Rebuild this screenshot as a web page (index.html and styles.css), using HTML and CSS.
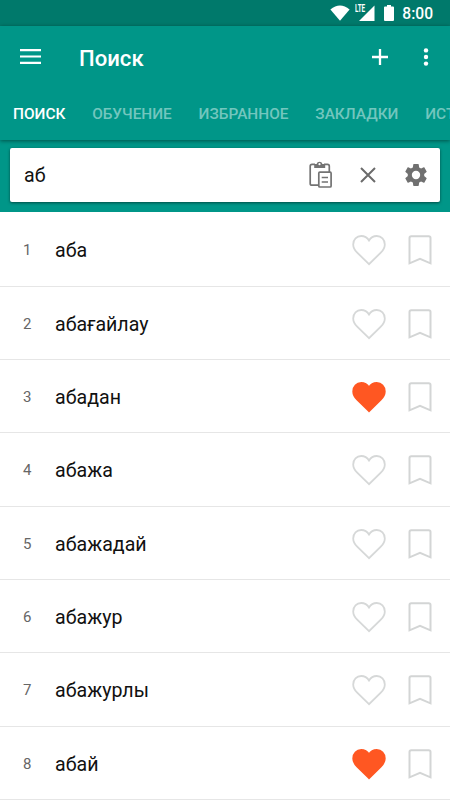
FILE: index.html
```html
<!DOCTYPE html>
<html lang="ru">
<head>
<meta charset="utf-8">
<title>Поиск</title>
<link rel="stylesheet" href="styles.css">
</head>
<body>
<svg class="defs" aria-hidden="true">
  <symbol id="heart" viewBox="0 0 36 32"><path d="M18 30.2 L6.2 18.6 C3.4 15.8 2.2 13.4 2.2 10.4 C2.2 5.4 5.7 2 10.2 2 C13.6 2 16.4 3.8 18 6.5 C19.6 3.8 22.4 2 25.8 2 C30.3 2 33.8 5.4 33.8 10.4 C33.8 13.4 32.6 15.8 29.8 18.6Z"/></symbol>
  <symbol id="bookmark" viewBox="0 0 24 30"><path d="M1.5 28.3V3Q1.5 1.2 3.3 1.2H20.7Q22.5 1.2 22.5 3V28.3L12 23.8Z"/></symbol>
</svg>
<div class="status">
  <svg class="wifi" viewBox="0 0 20 16"><path d="M.4 4.4Q10-3.4 19.6 4.4L10 15.8Z"/></svg>
  <div class="signal"><svg viewBox="0 0 16 16"><path d="M0 16 15.5 .5V16Z"/></svg><span>LTE</span></div>
  <svg class="battery" viewBox="0 0 10 16"><path d="M3 0H7V1.6H9Q10 1.6 10 2.6V15Q10 16 9 16H1Q0 16 0 15V2.6Q0 1.6 1 1.6H3Z"/></svg>
  <span class="clock">8:00</span>
</div>
<header class="header">
  <div class="toolbar">
    <svg class="menu" viewBox="0 0 21 15"><path d="M0 1.2H21M0 7.5H21M0 13.8H21"/></svg>
    <h1>Поиск</h1>
    <svg class="plus" viewBox="0 0 16 16"><path d="M8 0V16M0 8H16"/></svg>
    <svg class="more" viewBox="0 0 6 18"><circle cx="3" cy="2.4" r="2.2"/><circle cx="3" cy="9" r="2.2"/><circle cx="3" cy="15.6" r="2.2"/></svg>
  </div>
  <nav class="tabs"><span class="active">ПОИСК</span><span>ОБУЧЕНИЕ</span><span>ИЗБРАННОЕ</span><span>ЗАКЛАДКИ</span><span>ИСТОРИЯ</span></nav>
</header>
<section class="search">
  <div class="box">
    <span class="query">аб</span>
    <svg class="paste" viewBox="0 0 24 28"><path class="line" d="M10 24.2H3Q1.2 24.2 1.2 22.4V5.2Q1.2 3.4 3 3.4H6M15 3.4H18.5Q20.3 3.4 20.3 5.2V11"/><path class="solid" d="M5.2 3H7.6A3 3 0 0 1 13.4 3H16.2V7H5.2Z"/><circle class="hole" cx="10.5" cy="3.2" r="1.1"/><rect class="line" x="9.8" y="11.2" width="12.3" height="14.8" rx="1"/><path class="line" d="M12.7 16.5H19M12.7 21H19"/></svg>
    <svg class="close" viewBox="0 0 16 16"><path d="M1 1 15 15M15 1 1 15"/></svg>
    <svg class="gear" viewBox="2.2 2 19.6 20"><path d="M19.43 12.98c.04-.32.07-.64.07-.98s-.03-.66-.07-.98l2.11-1.65c.19-.15.24-.42.12-.64l-2-3.46c-.12-.22-.39-.3-.61-.22l-2.49 1c-.52-.4-1.08-.73-1.69-.98l-.38-2.65C14.46 2.18 14.25 2 14 2h-4c-.25 0-.46.18-.49.42l-.38 2.65c-.61.25-1.17.59-1.69.98l-2.49-1c-.23-.09-.49 0-.61.22l-2 3.46c-.13.22-.07.49.12.64l2.11 1.65c-.04.32-.07.65-.07.98s.03.66.07.98l-2.11 1.65c-.19.15-.24.42-.12.64l2 3.46c.12.22.39.3.61.22l2.49-1c.52.4 1.08.73 1.69.98l.38 2.65c.03.24.24.42.49.42h4c.25 0 .46-.18.49-.42l.38-2.65c.61-.25 1.17-.59 1.69-.98l2.49 1c.23.09.49 0 .61-.22l2-3.46c.12-.22.07-.49-.12-.64l-2.11-1.65zM12 15.8a3.8 3.8 0 1 1 0-7.6 3.8 3.8 0 0 1 0 7.6z"/></svg>
  </div>
</section>
<main class="list">
  <div class="row"><span class="num">1</span><span class="word">аба</span><svg class="heart"><use href="#heart"/></svg><svg class="mark"><use href="#bookmark"/></svg></div>
  <div class="row"><span class="num">2</span><span class="word">абағайлау</span><svg class="heart"><use href="#heart"/></svg><svg class="mark"><use href="#bookmark"/></svg></div>
  <div class="row"><span class="num">3</span><span class="word">абадан</span><svg class="heart liked"><use href="#heart"/></svg><svg class="mark"><use href="#bookmark"/></svg></div>
  <div class="row"><span class="num">4</span><span class="word">абажа</span><svg class="heart"><use href="#heart"/></svg><svg class="mark"><use href="#bookmark"/></svg></div>
  <div class="row"><span class="num">5</span><span class="word">абажадай</span><svg class="heart"><use href="#heart"/></svg><svg class="mark"><use href="#bookmark"/></svg></div>
  <div class="row"><span class="num">6</span><span class="word">абажур</span><svg class="heart"><use href="#heart"/></svg><svg class="mark"><use href="#bookmark"/></svg></div>
  <div class="row"><span class="num">7</span><span class="word">абажурлы</span><svg class="heart"><use href="#heart"/></svg><svg class="mark"><use href="#bookmark"/></svg></div>
  <div class="row"><span class="num">8</span><span class="word">абай</span><svg class="heart liked"><use href="#heart"/></svg><svg class="mark"><use href="#bookmark"/></svg></div>
</main>
</body>
</html>
```
FILE: styles.css
```css
* { box-sizing: border-box; }
html, body { height: 100%; }
body {
  margin: 0;
  overflow: hidden;
  display: flex;
  flex-direction: column;
  background: #fff;
  font-family: Roboto, "Noto Sans", sans-serif;
}
svg { display: block; flex: none; }
.defs { position: absolute; width: 0; height: 0; }

.status {
  height: 26px;
  flex: none;
  display: flex;
  align-items: center;
  justify-content: flex-end;
  padding-right: 17px;
  background: #00796b;
  color: #fff;
  fill: #fff;
}
.wifi { width: 20px; height: 16px; }
.signal { position: relative; margin: 0 9px 0 8px; }
.signal svg { width: 16px; height: 16px; margin-left: 1px; }
.signal span {
  position: absolute;
  left: -3px;
  top: -1px;
  transform-origin: 0 50%;
  font: 700 10.5px/10px Roboto, sans-serif;
  transform: scaleX(.6);
}
.battery { width: 10px; height: 16px; }
.clock { margin-left: 8px; padding-top: 2px; font-size: 15.6px; line-height: 20px; font-weight: 500; }

.header {
  position: relative;
  height: 114px;
  flex: none;
  background: #009688;
  box-shadow: 0 1px 4px rgba(0, 0, 0, .45);
  z-index: 1;
}
.toolbar {
  height: 61px;
  display: flex;
  align-items: center;
  padding: 0 21px 0 20px;
}
.menu { width: 21px; height: 15px; stroke: #fff; stroke-width: 2.2; }
h1 { flex: 1; margin: 3px 0 0 38px; font-size: 22.1px; line-height: 28px; font-weight: 500; color: #fff; }
.plus { width: 16px; height: 16px; stroke: #fff; stroke-width: 2.3; }
.more { width: 6px; height: 18px; margin-left: 35px; fill: #fff; }
.tabs {
  height: 53px;
  display: flex;
  gap: 26.8px;
  align-items: center;
  padding: 1px 0 0 13px;
  overflow: hidden;
  white-space: nowrap;
  font-size: 15.4px;
  font-weight: 500;
  color: #73c6be;
}
.tabs .active { color: #fff; }

.search { height: 72px; flex: none; padding: 8px 10px 0; background: #009688; }
.box {
  height: 53.5px;
  display: flex;
  align-items: center;
  padding: 0 13px 0 14px;
  border-radius: 2px;
  background: #fff;
  box-shadow: 0 1px 3px rgba(0, 0, 0, .5);
}
.query { flex: 1; padding-top: 1px; font-size: 19.6px; color: #111; }
.paste { width: 24px; height: 28px; margin-right: .5px; }
.paste .line { fill: none; stroke: #737373; stroke-width: 1.7; }
.paste .solid { fill: #737373; }
.paste .hole { fill: #fff; }
.close { width: 16px; height: 16px; margin-left: 27px; stroke: #6b6b6b; stroke-width: 2; }
.gear { width: 22px; height: 22px; margin-left: 29px; fill: #707070; }

.list { padding-top: 1.3px; }
.row {
  height: 73.34px;
  display: flex;
  align-items: center;
  padding: 2px 18.5px 0 23px;
  border-bottom: 1px solid #e6e6e6;
}
.num { width: 32px; font-size: 15px; color: #666; }
.word { flex: 1; padding-top: 1px; font-size: 19.6px; color: #111; }
.heart { width: 36px; height: 32px; fill: none; stroke: #d6d8d8; stroke-width: 1.8; }
.heart.liked { fill: #ff5722; stroke: #ff5722; }
.mark { width: 24px; height: 30px; margin-left: 20.5px; fill: none; stroke: #d3d5d5; stroke-width: 2; }
```
